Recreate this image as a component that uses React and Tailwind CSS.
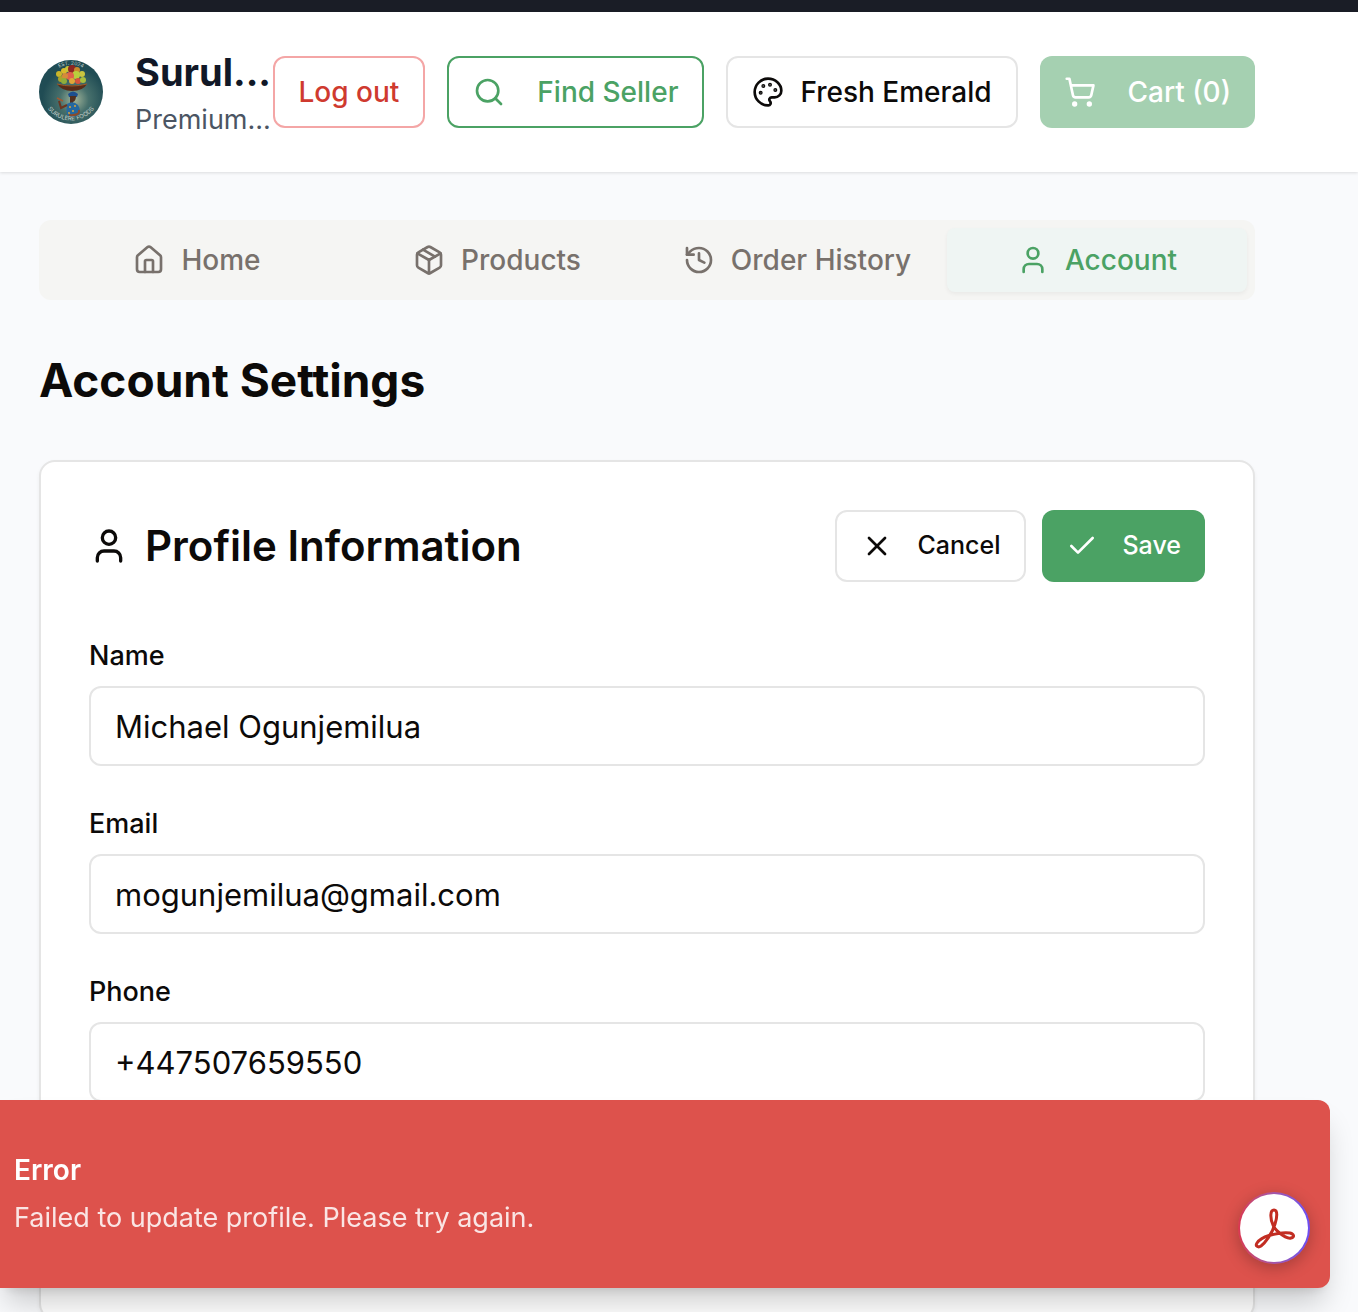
import React from "react";
import { Search, Palette, ShoppingCart, House, Package, History, User, X, Check } from "lucide-react";

const fruits = [
  [25, 11, 3, "#d9b92c"], [20, 14, 3, "#c9b52a"], [22, 19, 3, "#a9a52a"], [29, 9, 3, "#c8c43a"], [33, 9, 4, "#8d2622"],
  [38, 10, 3, "#c98a2c"], [43, 14, 3, "#c9c53f"], [37, 15, 4, "#b9cf3c"], [31, 16, 4, "#e0604a"],
  [26, 16, 3, "#d58b3a"], [25, 21, 3, "#8fae3a"], [33, 21, 3, "#e2a63a"], [39, 21, 3, "#d8543c"], [44, 20, 3, "#a9bf3f"],
];

function Logo() {
  return (
    <svg viewBox="0 0 64 64" className="size-16 shrink-0" role="img" aria-label="Surulere Foods">
      <defs>
        <radialGradient id="glow" cx="0.55" cy="0.62" r="0.5">
          <stop offset="0" stopColor="#a3b59a" />
          <stop offset="0.45" stopColor="#47706c" />
          <stop offset="1" stopColor="#204c54" />
        </radialGradient>
        <path id="arcTop" d="M10 17 A26 26 0 0 1 54 17" />
        <path id="arcBottom" d="M5 42 A29 29 0 0 0 59 42" />
      </defs>
      <circle cx="32" cy="32" r="32" fill="url(#glow)" />
      <text fontSize="5" fill="#c4cfca" fontFamily="Inter" textAnchor="middle">
        <textPath href="#arcTop" startOffset="50%">EST. 2024</textPath>
      </text>
      <text fontSize="6" fill="#c4cfca" fontFamily="Inter" textAnchor="middle">
        <textPath href="#arcBottom" startOffset="50%">SURULERE FOODS</textPath>
      </text>
      {fruits.map(([cx, cy, r, c], i) => <circle key={i} cx={cx} cy={cy} r={r} fill={c} />)}
      <path d="M18 24 Q33 27 48 24 Q44 31 33 31 Q23 31 18 24Z" fill="#5b2c17" />
      <path d="M18 24 Q33 28 48 24" stroke="#9b5a2a" strokeWidth="1" fill="none" />
      <path d="M29 34 Q34 29 39 34 L38 37 H30Z" fill="#1d4f8f" />
      <path d="M31 36 H37 Q37 41 34 42 V45 H31Z" fill="#51301f" />
      <path d="M28 44 Q34 40 39 45 Q42 50 40 55 Q34 58 28 55 Q27 50 28 44Z" fill="#2468a0" />
      <path d="M28 45 L22 48 L20 41" stroke="#6b3520" strokeWidth="2" fill="none" />
      <path d="M18 38 L24 41" stroke="#a25832" strokeWidth="1.5" />
      <path d="M40 50 Q41 56 30 55" stroke="#8a4b2a" strokeWidth="2" fill="none" />
      <g fill="#d9a33a"><circle cx="31" cy="47" r="1" /><circle cx="36" cy="46" r="1" /><circle cx="34" cy="51" r="1" /><circle cx="30" cy="53" r="1" /></g>
    </svg>
  );
}

const button = "flex h-18 shrink-0 items-center whitespace-nowrap rounded-xl px-6 font-medium";

const tabs = [
  { label: "Home", icon: House },
  { label: "Products", icon: Package },
  { label: "Order History", icon: History },
  { label: "Account", icon: User, active: true },
];

const fields = [
  { id: "name", label: "Name", type: "text", value: "Michael Ogunjemilua" },
  { id: "email", label: "Email", type: "email", value: "mogunjemilua@gmail.com" },
  { id: "phone", label: "Phone", type: "tel", value: "+447507659550" },
];

export default function App() {
  return (
    <div className="h-screen overflow-hidden bg-[#f9fafc] font-[Inter,sans-serif] text-[#0c0a09]">
      <div className="h-3 bg-[#1a1d26]" />
      <header className="flex h-40 items-center justify-between bg-white pr-[103px] pl-[39px] shadow-[0_1px_3px_rgba(0,0,0,0.12)]">
        <div className="flex shrink-0 items-center gap-8">
          <Logo />
          <div className="whitespace-nowrap">
            <div className="text-[38px] leading-14 font-bold text-[#111827]">Surul...</div>
            <p className="text-[27px] leading-10 text-[#4b5563]">Premium...</p>
          </div>
        </div>
        <div className="flex shrink-0 gap-[22px] text-[28px]">
          <button className={`${button} border-2 border-[#f4a6a6] text-[#cf3a2f]`}>Log out</button>
          <button className={`${button} gap-8 border-2 border-[#4ba264] text-[#4ba264]`}>
            <Search className="size-8" />Find Seller
          </button>
          <button className={`${button} gap-4 border-2 border-[#e5e5e5]`}>
            <Palette className="size-8" />Fresh Emerald
          </button>
          <button disabled className={`${button} gap-8 bg-[#a5d0b1] text-white`}>
            <ShoppingCart className="size-8" />Cart (0)
          </button>
        </div>
      </header>
      <main className="mt-12 mr-[103px] ml-[39px]">
        <nav className="grid h-20 grid-cols-4 rounded-xl bg-[#f5f5f3] p-2">
          {tabs.map(({ label, icon: Icon, active }) => (
            <button
              key={label}
              className={`flex items-center justify-center gap-4 rounded-lg text-[28px] font-medium whitespace-nowrap ${active ? "bg-[#eff5f3] text-[#4ba264] shadow-[0_2px_4px_rgba(0,0,0,0.05)]" : "text-[#78716c]"}`}
            >
              <Icon className="size-8 shrink-0" />{label}
            </button>
          ))}
        </nav>
        <h1 className="mt-12 text-[46px] leading-16 font-bold">Account Settings</h1>
        <section className="mt-12 rounded-2xl border-2 border-[#e5e5e5] bg-white p-12 shadow-[0_2px_4px_rgba(0,0,0,0.05)]">
          <div className="flex items-center justify-between">
            <h2 className="flex items-center gap-4 text-[42px] leading-12 font-semibold">
              <User className="size-10" />Profile Information
            </h2>
            <div className="flex gap-4 text-[25px]">
              <button className={`${button} gap-6 border-2 border-[#e5e5e5]`}><X className="size-8" />Cancel</button>
              <button className={`${button} gap-6 bg-[#4ba264] text-white`}><Check className="size-8" />Save</button>
            </div>
          </div>
          <form className="mt-14 flex flex-col gap-10">
            {fields.map((f) => (
              <div key={f.id} className="flex flex-col gap-3">
                <label htmlFor={f.id} className="text-[27px] leading-9 font-medium">{f.label}</label>
                <input
                  id={f.id}
                  type={f.type}
                  defaultValue={f.value}
                  className="h-20 w-full rounded-xl border-2 border-[#e5e5e5] bg-white px-6 text-[31px]"
                />
              </div>
            ))}
            <div className="h-32" />
          </form>
        </section>
      </main>
      <div role="alert" className="fixed right-7 bottom-6 left-0 rounded-r-xl bg-[#dd524c] px-[14px] pt-12 pb-13 text-white shadow-[0_20px_30px_-6px_rgba(0,0,0,0.2),0_8px_12px_-8px_rgba(0,0,0,0.15)]">
        <div className="text-[28px] leading-11 font-semibold">Error</div>
        <p className="mt-2 text-[27px] leading-9 text-white/85">Failed to update profile. Please try again.</p>
      </div>
      <button aria-label="Open in Acrobat" className="fixed right-12 bottom-12 size-18 rounded-full bg-linear-to-r from-[#d9364f] to-[#6a4df5] p-0.5 shadow-[0_4px_16px_rgba(0,0,0,0.25)]">
        <span className="flex size-full items-center justify-center rounded-full bg-white">
          <svg viewBox="0 0 44 42" className="h-[42px] w-11" fill="none" stroke="#c22d22" strokeWidth="3" strokeLinejoin="round">
            <path d="M21 18 C18 11 18 3 22 3 C26 3 25 11 23 17 C20 27 13 36 9 39 C6 41 3 39 5 36 C7 33 12 30 17 28.500 C24 26.500 32 25 38 26 C42 27 43 30 39 31 C35 32 30 28 27 25.500 C24 23 22 21 21 18 Z" />
          </svg>
        </span>
      </button>
    </div>
  );
}
